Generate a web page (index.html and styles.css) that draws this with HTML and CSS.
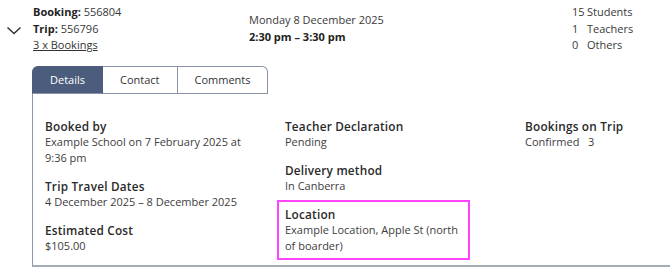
FILE: index.html
```html
<!DOCTYPE html>
<html>
<head>
<meta charset="utf-8">
<link rel="stylesheet" href="styles.css">
</head>
<body>
<div class="header">
  <div class="toggle">
    <svg class="chevron" width="16" height="10" viewBox="0 0 16 10"><path d="M1.5 1.5 L8 7.5 L14.5 1.5" fill="none" stroke="#333" stroke-width="1.5"/></svg>
  </div>
  <div class="refs">
    <div><b>Booking:</b> 556804</div>
    <div><b>Trip:</b> 556796</div>
    <div><a class="link" href="#">3 x Bookings</a></div>
  </div>
  <div class="when">
    <div>Monday 8 December 2025</div>
    <div><b>2:30 pm – 3:30 pm</b></div>
  </div>
  <div class="counts">
    <span>15</span><span>Students</span>
    <span>1</span><span>Teachers</span>
    <span>0</span><span>Others</span>
  </div>
</div>
<div class="tabs">
  <div class="tab active">Details</div>
  <div class="tab">Contact</div>
  <div class="tab">Comments</div>
</div>
<div class="panel">
  <div class="col col1">
    <div class="item">
      <div class="label">Booked by</div>
      <div class="value">Example School on 7 February 2025 at 9:36 pm</div>
    </div>
    <div class="item">
      <div class="label">Trip Travel Dates</div>
      <div class="value">4 December 2025 – 8 December 2025</div>
    </div>
    <div class="item">
      <div class="label">Estimated Cost</div>
      <div class="value">$105.00</div>
    </div>
  </div>
  <div class="col col2">
    <div class="item">
      <div class="label">Teacher Declaration</div>
      <div class="value">Pending</div>
    </div>
    <div class="item">
      <div class="label">Delivery method</div>
      <div class="value">In Canberra</div>
    </div>
    <div class="item highlight">
      <div class="label">Location</div>
      <div class="value">Example Location, Apple St (north of boarder)</div>
    </div>
  </div>
  <div class="col col3">
    <div class="item">
      <div class="label">Bookings on Trip</div>
      <div class="value">Confirmed&nbsp;&nbsp; 3</div>
    </div>
  </div>
</div>
</body>
</html>
```
FILE: styles.css
```css
* { box-sizing: content-box; }
body {
  margin: 0;
  font-family: "Open Sans", "Noto Sans", sans-serif;
  font-size: 11px;
  line-height: 16.5px;
  color: #3a3a3a;
  background: #fff;
}
b { color: #222; font-weight: 700; }
.header {
  display: flex;
  padding-top: 4px;
  height: 62px;
}
.toggle {
  width: 33px;
  padding-top: 22px;
  display: flex;
  justify-content: flex-start;
}
.chevron { margin-left: 6px; }
.refs { width: 216px; }
.link { color: #333; text-decoration: underline; }
.when { padding-top: 8px; width: 323px; }
.counts {
  display: grid;
  grid-template-columns: 13px auto;
  column-gap: 2px;
  align-content: start;
}
.tabs {
  display: flex;
  margin-left: 32px;
  height: 28px;
}
.tab {
  padding: 0 17px;
  line-height: 26px;
  border: 1px solid #8894aa;
  border-left: none;
  background: #fff;
  color: #333;
}
.tab:first-child {
  border-left: 1px solid #5a6a88;
  border-top-left-radius: 6px;
}
.tab:last-child { border-top-right-radius: 6px; padding-right: 16px; }
.tab.active {
  background: #4c5c7c;
  border-color: #4c5c7c;
  border-bottom-color: #8894aa;
  color: #fff;
}
.panel {
  margin-left: 32px;
  border-left: 1px solid #8e98ad;
  border-bottom: 2px solid #a6abb8;
  height: 147px;
  padding: 24px 0 0 12px;
  display: grid;
  grid-template-columns: 210px 210px 1fr;
  column-gap: 30px;
  align-items: start;
}
.item { margin-bottom: 12px; }
.label {
  font-weight: 600;
  font-size: 11.8px;
  line-height: 16px;
  color: #2a2a2a;
  letter-spacing: 0.2px;
}
.value { line-height: 16px; color: #3d3d3d; }
.highlight {
  margin: -6px 0 0 -8px;
  padding: 4px 6px 4px 6px;
  border: 2px solid #ff44ff;
  width: 177px;
}
```
